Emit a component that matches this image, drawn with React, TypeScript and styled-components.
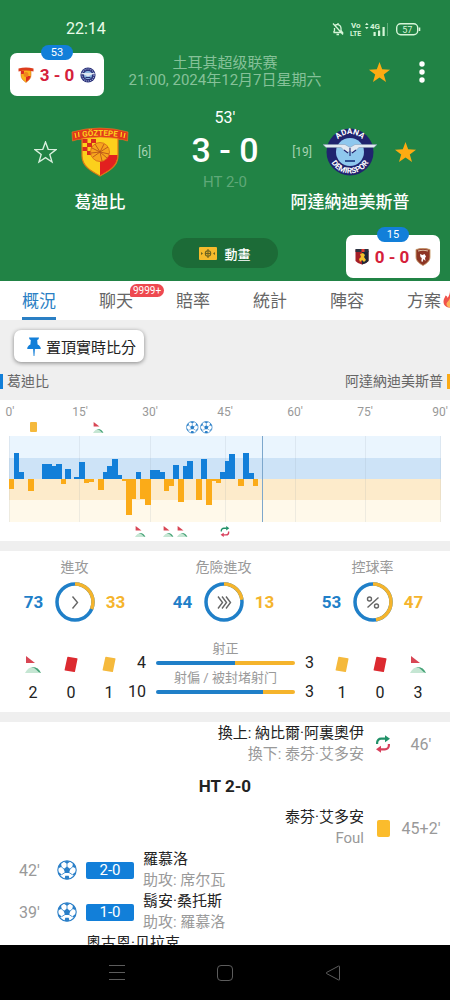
import React from "react";
import styled, { createGlobalStyle } from "styled-components";

const BLUE = "#127fd9";
const AMBER = "#f5b42c";

const GlobalStyle = createGlobalStyle`
  * { box-sizing: border-box; }
  body {
    margin: 0;
    font-family: Roboto, "Noto Sans CJK TC", sans-serif;
    background: #fff;
    color: #222;
  }
  button { font: inherit; border: 0; padding: 0; background: none; color: inherit; cursor: pointer; }
  svg { display: block; flex: none; }
`;

const Screen = styled.div`
  display: flex;
  flex-direction: column;
  height: 100vh;
  overflow: hidden;
`;

const Content = styled.main`
  flex: 1;
  min-height: 0;
  overflow-y: auto;
  scrollbar-width: none;
  &::-webkit-scrollbar { display: none; }
`;

/* ---------- header ---------- */

const Header = styled.header`
  position: relative;
  background: #218345;
  color: #fff;
  padding-bottom: 13px;
`;

const StatusBar = styled.div`
  display: flex;
  align-items: center;
  justify-content: space-between;
  padding: 19px 28px 16px 66px;
  font-size: 16px;
  line-height: 20px;
  color: #e9fbe9;
`;

const TopRow = styled.div`
  display: grid;
  grid-template-columns: 1fr auto 1fr;
  align-items: center;
  padding: 0 14px;
`;

const League = styled.div`
  grid-column: 2;
  text-align: center;
  font-size: 15px;
  line-height: 17px;
  color: #86c199;
  white-space: nowrap;
`;

const Actions = styled.div`
  display: flex;
  justify-content: flex-end;
  gap: 15px;
`;

const IconButton = styled.button`
  display: flex;
  align-items: center;
  justify-content: center;
  width: 28px;
  height: 28px;
`;

const Match = styled.div`
  display: grid;
  grid-template-columns: 1fr 74px 1fr;
  padding: 19px 12px 0;
`;

const Side = styled.div`
  padding-top: 16px;
  text-align: center;
`;

const CrestRow = styled.div`
  display: grid;
  grid-template-columns: 34px 60px 34px;
  gap: 8px;
  justify-content: center;
  align-items: center;
  justify-items: center;
  height: 56px;
`;

const Rank = styled.span<{ $away?: boolean }>`
  justify-self: ${(p) => (p.$away ? "end" : "start")};
  font-size: 12px;
  color: #a6d3b2;
`;

const TeamName = styled.div`
  padding-top: 10px;
  font-size: 17px;
  line-height: 24px;
  font-weight: 500;
  white-space: nowrap;
`;

const Centre = styled.div`
  text-align: center;
  white-space: nowrap;
`;

const Minute = styled.div`
  font-size: 16px;
  line-height: 20px;
`;

const Score = styled.div`
  font-size: 34px;
  line-height: 44px;
  font-weight: 500;
`;

const HalfTime = styled.div`
  font-size: 15px;
  line-height: 20px;
  color: #5fa878;
`;

const AnimationButton = styled.button`
  display: flex;
  align-items: center;
  justify-content: center;
  gap: 7px;
  width: 106px;
  height: 30px;
  margin: 24px auto 0;
  border-radius: 15px;
  background: #1c6b37;
  font-size: 13px;
  font-weight: 500;
`;

const FloatCard = styled.button<{ $corner: "start" | "end" }>`
  position: absolute;
  ${(p) => (p.$corner === "start" ? "left: 10px; top: 53px;" : "right: 10px; bottom: 3px;")}
  display: flex;
  align-items: center;
  justify-content: center;
  gap: 6px;
  width: 94px;
  height: 43px;
  border-radius: 7px;
  background: #fff;
  color: #d5203a;
  font-size: 17px;
  font-weight: 700;
  white-space: nowrap;
`;

const FloatMinute = styled.span`
  position: absolute;
  top: -8px;
  left: 50%;
  transform: translateX(-50%);
  width: 32px;
  border-radius: 8px;
  background: ${BLUE};
  color: #fff;
  font-size: 11px;
  font-weight: 400;
  line-height: 15px;
  text-align: center;
`;

/* ---------- tabs ---------- */

const Tabs = styled.nav`
  display: flex;
  gap: 43px;
  padding-left: 22px;
  overflow: hidden;
  background: #fff;
`;

const Tab = styled.button<{ $active?: boolean }>`
  position: relative;
  display: flex;
  align-items: center;
  flex: none;
  height: 39px;
  font-size: 17px;
  color: ${(p) => (p.$active ? "#2a7fc4" : "#666")};
  border-bottom: 3px solid ${(p) => (p.$active ? "#2a7fc4" : "transparent")};
`;

const TabBadge = styled.span`
  position: absolute;
  left: 31px;
  top: 3px;
  padding: 0 3px;
  border-radius: 7px 7px 7px 2px;
  background: #ee4950;
  color: #fff;
  font-size: 10px;
  line-height: 13px;
`;

/* ---------- pin bar and legend ---------- */

const PinArea = styled.section`
  background: #efefef;
  padding-top: 10px;
`;

const PinButton = styled.button`
  display: flex;
  align-items: center;
  gap: 4px;
  height: 32px;
  margin-left: 14px;
  padding: 0 8px 0 12px;
  border-radius: 7px;
  background: #fff;
  box-shadow: 0 1px 4px rgba(0, 0, 0, 0.45);
  font-size: 15px;
  color: #222;
`;

const Legend = styled.div`
  display: flex;
  justify-content: space-between;
  padding: 9px 0;
`;

const LegendItem = styled.span<{ $away?: boolean }>`
  font-size: 14px;
  line-height: 20px;
  color: #666;
  display: flex;
  align-items: center;
  gap: 4px;
  flex-direction: ${(p) => (p.$away ? "row-reverse" : "row")};
  &::before {
    content: "";
    width: 3px;
    height: 15px;
    background: ${(p) => (p.$away ? "#fbab18" : BLUE)};
  }
`;

/* ---------- chart ---------- */

const ChartSection = styled.section`
  padding-top: 4px;
`;

const Axis = styled.div`
  display: grid;
  grid-template-columns: 70fr 70fr 75fr 70fr 70fr 75fr 0;
  padding: 0 10px 1px;
  font-size: 12px;
  line-height: 16px;
  color: #999;
`;

const Tick = styled.span`
  display: flex;
  justify-content: center;
  width: 0;
  white-space: nowrap;
`;

const ChartSvg = styled.svg`
  width: 100%;
  height: auto;
`;

/* ---------- statistics ---------- */

const Divider = styled.div`
  height: 10px;
  background: #efefef;
`;

const Stats = styled.section`
  padding: 6px 0 9px;
`;

const Rings = styled.div`
  display: grid;
  grid-template-columns: repeat(3, 1fr);
  padding-right: 3px;
`;

const RingStat = styled.div`
  text-align: center;
`;

const RingTitle = styled.div`
  font-size: 14px;
  line-height: 20px;
  color: #999;
`;

const RingRow = styled.div`
  display: flex;
  align-items: center;
  justify-content: center;
  gap: 11px;
  padding-top: 5px;
`;

const RingValue = styled.span<{ $away?: boolean }>`
  width: 20px;
  font-size: 17px;
  font-weight: 700;
  color: ${(p) => (p.$away ? AMBER : "#1f7fc8")};
`;

const Shots = styled.div`
  display: grid;
  grid-template-columns: 114px 1fr 114px;
  padding: 20px 13px 0 14px;
`;

const Tally = styled.div`
  display: grid;
  grid-template-columns: repeat(3, 1fr);
`;

const TallyItem = styled.div`
  display: flex;
  flex-direction: column;
  align-items: center;
  gap: 9px;
  padding-top: 12px;
  font-size: 16px;
  line-height: 20px;
`;

const TallyIcon = styled.span`
  display: flex;
  align-items: center;
  height: 20px;
`;

const BarRow = styled.div`
  display: grid;
  grid-template-columns: 18px 1fr 18px;
  column-gap: 10px;
  align-items: end;
  height: 29px;
`;

const BarValue = styled.span<{ $away?: boolean }>`
  display: flex;
  justify-content: ${(p) => (p.$away ? "flex-start" : "flex-end")};
  font-size: 16px;
  line-height: 16px;
`;

const BarCell = styled.div`
  text-align: center;
  padding-bottom: 6px;
`;

const BarLabel = styled.div`
  font-size: 13px;
  line-height: 14px;
  padding-bottom: 5px;
  color: #999;
  white-space: nowrap;
`;

const Bar = styled.div`
  display: flex;
  height: 4px;
  border-radius: 2px;
  overflow: hidden;
`;

const BarPart = styled.span<{ $share: number; $away?: boolean }>`
  flex: ${(p) => p.$share};
  background: ${(p) => (p.$away ? AMBER : "#1f7fc8")};
`;

/* ---------- timeline ---------- */

const Timeline = styled.section`
  padding-top: 1px;
`;

const HomeEvent = styled.div`
  display: grid;
  grid-template-columns: 29px 20px auto 1fr;
  align-items: center;
  gap: 9px;
  padding-left: 19px;
  min-height: 42px;
`;

const AwayEvent = styled.div`
  display: grid;
  grid-template-columns: 1fr 20px 38px;
  align-items: center;
  justify-items: center;
  column-gap: 9px;
  min-height: 42px;
  padding-right: 10px;
`;

const EventText = styled.div<{ $away?: boolean; $top?: boolean }>`
  justify-self: ${(p) => (p.$away ? "end" : "start")};
  align-self: ${(p) => (p.$top ? "start" : "center")};
  text-align: ${(p) => (p.$away ? "right" : "left")};
  font-size: 15px;
  line-height: 21px;
  white-space: nowrap;
`;

const Muted = styled.div`
  color: #999;
`;

const EventTime = styled.span`
  font-size: 16px;
  color: #999;
  white-space: nowrap;
`;

const GoalScore = styled.span`
  width: 48px;
  border-radius: 2px;
  background: ${BLUE};
  color: #fff;
  font-size: 15px;
  line-height: 17px;
  text-align: center;
`;

const PeriodLine = styled.h2`
  margin: 0;
  font-size: 17px;
  line-height: 42px;
  font-weight: 700;
  text-align: center;
`;

/* ---------- system navigation ---------- */

const SystemNav = styled.nav`
  display: grid;
  grid-template-columns: repeat(3, 1fr);
  justify-items: center;
  align-items: center;
  flex: none;
  height: 55px;
  padding: 0 63px;
  background: #000;
`;

/* ---------- icons ---------- */

const STAR = "M12 1l2.8 7.7 8.2.3-6.5 5 2.3 7.9-6.8-4.6-6.8 4.6 2.3-7.9L1 9l8.2-.3z";

const Star = ({ filled }: { filled?: boolean }) => (
  <svg width="23" height="23" viewBox="0 0 24 24" fill={filled ? "#fdab12" : "none"} stroke={filled ? "none" : "#d9f0de"} strokeWidth="1.4">
    <path d={STAR} />
  </svg>
);

const StatusIcons = () => (
  <svg width="90" height="16" viewBox="0 0 90 16" fill="none" stroke="#d6f5d8" fontFamily="Roboto, sans-serif">
    <path d="M1.500 11.500h9l-1.500-2V7a3.500 3.500 0 0 0-6-2.400M2.500 7v2.500l-1 2M4.500 13.500h2.500M6 2v1.500M1 2.500l10 11" strokeWidth="1.300" />
    <g fill="#d6f5d8" stroke="none" fontWeight="700">
      <text x="19" y="7" fontSize="8">Vo</text>
      <text x="18" y="15" fontSize="7">LTE</text>
      <text x="38" y="8" fontSize="8">4G</text>
      <path d="M33 4l1.800-2.200L36.600 4zM33 6l1.800 2.200L36.600 6zM41.500 11h2.200v4h-2.200zM46 9.500h2.200V15H46zM50.500 6h2.200v9h-2.200z" />
      <path d="M55 2h1v13h-1z" opacity=".35" />
    </g>
    <rect x="64.700" y="2.700" width="21" height="11" rx="4" strokeWidth="1.400" />
    <path d="M87.500 6.500v3.500" strokeWidth="1.600" />
    <text x="75.200" y="11.500" textAnchor="middle" fontSize="9" fill="#d6f5d8" stroke="none">57</text>
  </svg>
);

const GoztepeCrest = ({ width = 58 }: { width?: number }) => (
  <svg width={width} height={(width * 50) / 58} viewBox="0 0 58 50">
    <path d="M11 8h36v21c0 10-9 15-18 20-9-5-18-10-18-20z" fill="#fcd01c" stroke="#d97a14" strokeWidth="1.200" />
    <path d="M29 28h17.500c0 11-8 15-17.500 20.500z" fill="#e2201f" />
    <path d="M11.500 12h5v4h-5zM20 12h5v4h-5zM16 16h5v4h-5zM25 16h4v4h-4zM11.500 20h5v4h-5zM20 20h5v4h-5zM16 24h5v4h-5z" fill="#d92c1c" />
    <circle cx="29" cy="25" r="9.500" fill="#f7a51c" stroke="#d4661a" strokeWidth=".8" />
    <path d="M21 21l8 4 8-5M22 30l7-5 2 9M24 17l5 8-9 1M33 17l-4 8 9 2M29 25l7 6" stroke="#b9551a" strokeWidth=".9" fill="none" />
    <path d="M1 5q28-8 56 0l-.5 9q-5-2-9-1.500v-1q-18-3-37 0v1q-4-.5-9 1.500z" fill="#e23a1b" stroke="#ef7a1d" strokeWidth=".6" />
    <path id="goztepe-arc" d="M10 10.200q19-3 38 0" fill="none" />
    <text fontSize="8" fontWeight="700" fill="#fcd01c" fontFamily="Roboto, sans-serif" textAnchor="middle">
      <textPath href="#goztepe-arc" startOffset="50%">GÖZTEPE</textPath>
    </text>
    <path d="M4 6l1 5M7.500 5l.5 5M50.500 5l-.5 5M54 6l-1 5" stroke="#fcd01c" strokeWidth="1.200" />
  </svg>
);

const AdanaCrest = ({ width = 54 }: { width?: number }) => (
  <svg width={width} height={(width * 48) / 54} viewBox="0 0 54 48">
    <circle cx="27" cy="24" r="23.500" fill="#20246f" />
    <circle cx="27" cy="24" r="14" fill="#8fc8ee" />
    <path d="M0 16.500h22l5 3 5-3h22l-3 3H36l-6 5.500-3-2-3 2-6-5.500H3z" fill="#e3eaf2" stroke="#7f93ad" strokeWidth=".5" />
    <path d="M27 20v8M21 22l4 3M33 22l-4 3" stroke="#20246f" strokeWidth="1.100" />
    <path d="M22 33h10" stroke="#2d4f92" strokeWidth="2" />
    <path id="adana-top" d="M11 22a16 16 0 0 1 32 0" fill="none" />
    <path id="adana-bottom" d="M5.500 24a21.500 21.500 0 0 0 43 0" fill="none" />
    <g fontSize="8" fontWeight="700" fill="#fff" fontFamily="Roboto, sans-serif" textAnchor="middle">
      <text><textPath href="#adana-top" startOffset="50%">ADANA</textPath></text>
      <text><textPath href="#adana-bottom" startOffset="50%">DEMIRSPOR</textPath></text>
    </g>
  </svg>
);

const SmallGoztepe = () => (
  <svg width="16" height="16" viewBox="0 0 16 16">
    <path d="M3 2h10v6c0 4-2.500 5.500-5 7.500C5.500 13.500 3 12 3 8z" fill="#f9b41c" stroke="#d9711c" strokeWidth=".6" />
    <path d="M8 9h4.600c-.4 3-2.400 4.500-4.600 6zM3 4h3v3H3z" fill="#dd2c1f" />
    <path d="M.5 1.500q7.500-2 15 0v3q-7.500-2-15 0z" fill="#dd3c1c" />
    <circle cx="8" cy="7.500" r="2.500" fill="#f0851c" />
  </svg>
);

const SmallAdana = () => (
  <svg width="16" height="16" viewBox="0 0 16 16">
    <circle cx="8" cy="8" r="7.600" fill="#2a3278" />
    <circle cx="8" cy="8" r="6" fill="none" stroke="#a9b0dd" strokeWidth="1.200" strokeDasharray="1 1" />
    <circle cx="8" cy="8" r="4" fill="#8db9e0" />
    <path d="M0 6h16l-5 2-3 1.500L5 8z" fill="#dfe6f0" />
    <path d="M5.500 10.500h5" stroke="#2a3278" />
  </svg>
);

const GenoaCrest = () => (
  <svg width="14" height="17" viewBox="0 0 14 17">
    <path d="M.5 1.500h13V13q-2.500 3-6.500 3.500Q3 16 .5 13z" fill="#a61e27" />
    <path d="M7 3h6.500v10q-2.500 3-6.500 3.500z" fill="#1d2838" />
    <path d="M.5 1h13v3H.5z" fill="#2c3442" />
    <path d="M6.500 1h3v3h-3z" fill="#e53935" />
    <path d="M5 6l3-1 2 2-1 2 2 3-2 2-2-2-2 2-1-3 2-2z" fill="#f3c22b" />
  </svg>
);

const TorinoCrest = () => (
  <svg width="16" height="18" viewBox="0 0 16 18">
    <path d="M1 1.500q7-2.500 14 0V9c0 4-3.500 6.500-7 8.500C4.500 15.500 1 13 1 9z" fill="#8d3524" stroke="#c79b6c" strokeWidth=".9" />
    <path d="M3 3q5-1.500 10 0" stroke="#dcbfa0" strokeWidth="1.200" fill="none" />
    <path d="M5 6l2.500 1L9.500 6l1.500 2.500-1 1.500.5 3-2-2-1 3-1.200-.8.5-3.200-1.300-1z" fill="#fff" />
  </svg>
);

const PitchIcon = () => (
  <svg width="18" height="13" viewBox="0 0 18 13">
    <rect width="18" height="13" rx="1" fill="#f6ba2c" />
    <g fill="none" stroke="#6d6320" strokeWidth="1.100">
      <circle cx="9" cy="6.500" r="2.700" />
      <path d="M9 2v9M6 6.500h6" />
    </g>
    <path d="M2 5l2 1.500L2 8zM16 5l-2 1.500L16 8z" fill="#6d6320" />
  </svg>
);

const PinIcon = () => (
  <svg width="16" height="21" viewBox="0 0 16 21" fill={BLUE}>
    <path d="M3 1.500h10q0 2-1.800 2.500l.4 4.500q3.200 1.500 3.200 4.500H1.200q0-3 3.200-4.500L4.800 4Q3 3.500 3 1.500zM7.100 13h1.800l-.5 7h-.8z" />
  </svg>
);

const Flame = () => (
  <svg width="18" height="18" viewBox="0 0 18 18">
    <path d="M9 .5c1 4 6.500 5.500 6.500 11 0 4-3 6-6.500 6s-6.500-2-6.500-6c0-2.500 1.500-4 2-6 1.500.5 2 1.500 2 2.500C8 6 9 4 9 .5z" fill="#f0524a" />
    <path d="M9 8c0 3 3.500 3.500 3.500 6 0 2-1.500 3.500-3.500 3.500S5.500 16 5.500 14 8 11 9 8z" fill="#fdb35a" />
  </svg>
);

const CornerShape = () => (
  <>
    <path d="M1 0v7h9z" fill="#d84654" />
    <path d="M0 17q3-6 8-6t8 6z" fill="#c5e6d3" />
    <path d="M6 11q7-1 10 6-3-1-5-3.500T6 11z" fill="#45a277" />
  </>
);

const Corner = () => (
  <svg width="16" height="17" viewBox="0 0 16 17"><CornerShape /></svg>
);

const TiltedCard = ({ color }: { color: string }) => (
  <svg width="14" height="17" viewBox="0 0 14 17">
    <path d="M4 .7L13 2.300q.6.100.5.700L11 15.500q-.2.700-.8.600L1 14.600q-.6-.2-.4-.8L3.300 1.200q.1-.6.700-.5z" fill={color} />
  </svg>
);

const YellowCard = () => (
  <svg width="13" height="17" viewBox="0 0 13 17"><rect width="13" height="17" rx="2" fill="#fbbc2c" /></svg>
);

const SwapShape = () => (
  <>
    <g fill="none" strokeWidth="2.200">
      <path d="M2.100 9V7.700a4 4 0 0 1 4-4H11" stroke="#219168" />
      <path d="M13.900 9v1.300a4 4 0 0 1-4 4H5" stroke="#d8405c" />
    </g>
    <path d="M10 .2l5 3.500-5 3.500z" fill="#219168" />
    <path d="M6 10.800l-5 3.500 5 3.500z" fill="#d8405c" />
  </>
);

const Swap = () => (
  <svg width="16" height="18" viewBox="0 0 16 18"><SwapShape /></svg>
);

const BallShape = () => (
  <>
    <circle cx="10" cy="10" r="9.200" fill="#fff" stroke="#2a7fc8" strokeWidth="1.100" />
    <g fill="#2a7fc8">
      <path d="M10 6.600l3.300 2.400-1.300 3.900H8L6.700 9z" />
      <path d="M6.500 1.600Q10 .2 13.500 1.600L10 3.700zM1 8.500Q1.500 5 4 3l.6 3.800zM19 8.500Q18.500 5 16 3l-.6 3.800zM3 15.600Q1.200 13.500 1 11.500l3.700 3zM17 15.600q1.800-2.100 2-4.100l-3.700 3zM7.500 18.900l.8-3.200h3.400l.8 3.200q-2.500.6-5 0z" />
    </g>
    <path d="M10 3v4M4 6.500L7 9M16 6.500L13 9M4.500 14.800L8 12.500M15.500 14.800L12 12.500" stroke="#2a7fc8" strokeWidth=".8" />
  </>
);

const Ball = () => (
  <svg width="20" height="20" viewBox="0 0 20 20"><BallShape /></svg>
);

/* ---------- data ---------- */

// Pressure bars: start x, end x, height; positive heights belong to the home side.
const PRESSURE: [number, number, number][] = [
  [9, 14, -10], [14, 19, 26], [19, 24, 7], [28, 34, -12], [42, 52, 15], [52, 56, 13], [56, 62, 15],
  [61, 66, -5], [65, 71, 10], [74, 80, 2], [79, 85, 17], [84, 89, -4], [89, 94, -3], [98, 104, -11],
  [103, 107, 7], [107, 112, 13], [112, 118, 20], [118, 122, 4], [122, 126, -2], [126, 132, -36],
  [132, 136, -20], [136, 141, 7], [140, 145, -20], [145, 151, -26], [150, 160, 9], [160, 165, 7],
  [164, 169, -12], [169, 174, -7], [173, 179, 14], [178, 184, -23], [183, 187, 13], [187, 193, 18],
  [196, 202, -21], [201, 207, 20], [206, 212, -26], [212, 216, -2], [216, 221, -4], [220, 225, 7],
  [225, 229, 18], [229, 235, 25], [238, 244, -7], [243, 249, 26], [249, 254, 6], [253, 258, -7],
];

const ZERO = 58;

const PressureChart = () => (
  <ChartSvg viewBox="0 0 450 120" role="img" aria-label="葛迪比 / 阿達納迪美斯普">
    <rect x="9" y="15" width="432" height="22" fill="#eaf5fe" />
    <rect x="9" y="37" width="432" height="21" fill="#cde3f7" />
    <rect x="9" y="58" width="432" height="21" fill="#fdebcb" />
    <rect x="9" y="79" width="432" height="22" fill="#fff9ea" />
    {[9, 79, 150, 225, 295, 365, 440].map((x) => (
      <path key={x} d={`M${x + 0.5} 15V101`} stroke="#8a9aa5" strokeOpacity=".15" />
    ))}
    {PRESSURE.map(([a, b, h]) => (
      <rect key={a} x={a} width={b - a} y={h > 0 ? ZERO - h : ZERO} height={Math.abs(h)} fill={h > 0 ? BLUE : "#fbab18"} />
    ))}
    <path d="M262.500 15V101" stroke="#7da7cc" />
    <rect x="30" y="1" width="7" height="10" rx="1" fill="#f5b93c" />
    <g transform="translate(93 1) scale(.65)"><CornerShape /></g>
    <g transform="translate(186 0) scale(.63)"><BallShape /></g>
    <g transform="translate(200 0) scale(.63)"><BallShape /></g>
    {[135, 163, 177].map((x) => (
      <g key={x} transform={`translate(${x} 105) scale(.65)`}><CornerShape /></g>
    ))}
    <g transform="translate(220 105) scale(.62)"><SwapShape /></g>
  </ChartSvg>
);

const RING_GLYPHS: Record<string, string> = {
  attack: "M17.500 14.500l5 6-5 6",
  danger: "M14 14.500l4.500 6-4.500 6M18 14.500l4.500 6-4.500 6M22 14.500l4.500 6-4.500 6",
  possession: "M25.500 15.500l-11 10M16.500 15a2 2 0 1 1 0 4 2 2 0 1 1 0-4M23.500 22a2 2 0 1 1 0 4 2 2 0 1 1 0-4",
};

const Ring = ({ home, away, glyph }: { home: number; away: number; glyph: string }) => {
  const length = 2 * Math.PI * 18;
  const awayLength = (length * away) / (home + away);
  return (
    <svg width="40" height="40" viewBox="0 0 40 40" fill="none">
      <circle cx="20" cy="20" r="18" stroke="#1f7fc8" strokeWidth="3.500" />
      <circle cx="20" cy="20" r="18" stroke={AMBER} strokeWidth="3.500" strokeDasharray={`${awayLength} ${length}`} transform="rotate(-90 20 20)" />
      <path d={RING_GLYPHS[glyph]} stroke="#666" strokeWidth="1.400" />
    </svg>
  );
};

const RINGS = [
  { title: "進攻", home: 73, away: 33, glyph: "attack" },
  { title: "危險進攻", home: 44, away: 13, glyph: "danger" },
  { title: "控球率", home: 53, away: 47, glyph: "possession" },
];

const BARS = [
  { label: "射正", home: 4, away: 3 },
  { label: "射偏 / 被封堵射门", home: 10, away: 3 },
];

const TABS = ["概況", "聊天", "賠率", "統計", "陣容", "方案"];

const Count = ({ icon, value }: { icon: React.ReactNode; value: number }) => (
  <TallyItem>
    <TallyIcon>{icon}</TallyIcon>
    <span>{value}</span>
  </TallyItem>
);

const Goal = ({ time, score, scorer, assist }: { time: string; score: string; scorer: string; assist: string }) => (
  <HomeEvent>
    <EventTime>{time}</EventTime>
    <Ball />
    <GoalScore>{score}</GoalScore>
    <EventText>
      <div>{scorer}</div>
      <Muted>{assist}</Muted>
    </EventText>
  </HomeEvent>
);

export default function App() {
  return (
    <Screen>
      <GlobalStyle />
      <Content>
        <Header>
          <StatusBar>
            <span>22:14</span>
            <StatusIcons />
          </StatusBar>
          <TopRow>
            <League>
              <div>土耳其超级联赛</div>
              <div>21:00, 2024年12月7日星期六</div>
            </League>
            <Actions>
              <IconButton aria-label="收藏"><Star filled /></IconButton>
              <IconButton aria-label="更多">
                <svg width="6" height="24" viewBox="0 0 6 24" fill="#fff">
                  <circle cx="3" cy="4" r="2.700" /><circle cx="3" cy="12" r="2.700" /><circle cx="3" cy="20" r="2.700" />
                </svg>
              </IconButton>
            </Actions>
          </TopRow>
          <Match>
            <Side>
              <CrestRow>
                <IconButton aria-label="收藏葛迪比"><Star /></IconButton>
                <GoztepeCrest />
                <Rank>[6]</Rank>
              </CrestRow>
              <TeamName>葛迪比</TeamName>
            </Side>
            <Centre>
              <Minute>53'</Minute>
              <Score>3 - 0</Score>
              <HalfTime>HT 2-0</HalfTime>
            </Centre>
            <Side>
              <CrestRow>
                <Rank $away>[19]</Rank>
                <AdanaCrest />
                <IconButton aria-label="收藏阿達納迪美斯普"><Star filled /></IconButton>
              </CrestRow>
              <TeamName>阿達納迪美斯普</TeamName>
            </Side>
          </Match>
          <AnimationButton><PitchIcon />動畫</AnimationButton>
          <FloatCard $corner="start">
            <FloatMinute>53</FloatMinute>
            <SmallGoztepe /><span>3 - 0</span><SmallAdana />
          </FloatCard>
          <FloatCard $corner="end">
            <FloatMinute>15</FloatMinute>
            <GenoaCrest /><span>0 - 0</span><TorinoCrest />
          </FloatCard>
        </Header>

        <Tabs>
          {TABS.map((name, i) => (
            <Tab key={name} $active={i === 0}>
              {name}
              {i === 1 && <TabBadge>9999+</TabBadge>}
              {i === 5 && <Flame />}
            </Tab>
          ))}
        </Tabs>

        <PinArea>
          <PinButton><PinIcon />置頂實時比分</PinButton>
          <Legend>
            <LegendItem>葛迪比</LegendItem>
            <LegendItem $away>阿達納迪美斯普</LegendItem>
          </Legend>
        </PinArea>

        <ChartSection>
          <Axis>
            {[0, 15, 30, 45, 60, 75, 90].map((m) => <Tick key={m}>{m}'</Tick>)}
          </Axis>
          <PressureChart />
        </ChartSection>
        <Divider />

        <Stats>
          <Rings>
            {RINGS.map((r) => (
              <RingStat key={r.title}>
                <RingTitle>{r.title}</RingTitle>
                <RingRow>
                  <RingValue>{r.home}</RingValue>
                  <Ring home={r.home} away={r.away} glyph={r.glyph} />
                  <RingValue $away>{r.away}</RingValue>
                </RingRow>
              </RingStat>
            ))}
          </Rings>
          <Shots>
            <Tally>
              <Count icon={<Corner />} value={2} />
              <Count icon={<TiltedCard color="#dc2a30" />} value={0} />
              <Count icon={<TiltedCard color="#f5b93c" />} value={1} />
            </Tally>
            <div>
              {BARS.map((b) => (
                <BarRow key={b.label}>
                  <BarValue>{b.home}</BarValue>
                  <BarCell>
                    <BarLabel>{b.label}</BarLabel>
                    <Bar>
                      <BarPart $share={b.home} />
                      <BarPart $share={b.away} $away />
                    </Bar>
                  </BarCell>
                  <BarValue $away>{b.away}</BarValue>
                </BarRow>
              ))}
            </div>
            <Tally>
              <Count icon={<TiltedCard color="#f5b93c" />} value={1} />
              <Count icon={<TiltedCard color="#dc2a30" />} value={0} />
              <Count icon={<Corner />} value={3} />
            </Tally>
          </Shots>
        </Stats>
        <Divider />

        <Timeline>
          <AwayEvent>
            <EventText $away>
              <div>換上: 納比爾·阿裏奧伊</div>
              <Muted>換下: 泰芬·艾多安</Muted>
            </EventText>
            <Swap />
            <EventTime>46'</EventTime>
          </AwayEvent>
          <PeriodLine>HT 2-0</PeriodLine>
          <AwayEvent>
            <EventText $away>
              <div>泰芬·艾多安</div>
              <Muted>Foul</Muted>
            </EventText>
            <YellowCard />
            <EventTime>45+2'</EventTime>
          </AwayEvent>
          <Goal time="42'" score="2-0" scorer="羅慕洛" assist="助攻: 席尔瓦" />
          <Goal time="39'" score="1-0" scorer="鬍安·桑托斯" assist="助攻: 羅慕洛" />
          <HomeEvent>
            <span />
            <span />
            <EventText $top>奧古恩·贝拉克</EventText>
          </HomeEvent>
        </Timeline>
      </Content>

      <SystemNav>
        <IconButton aria-label="選單">
          <svg width="16" height="16" viewBox="0 0 16 16" stroke="#5c5c5c"><path d="M0 .5h16M0 7.500h16M0 14.500h16" /></svg>
        </IconButton>
        <IconButton aria-label="主畫面">
          <svg width="16" height="16" viewBox="0 0 16 16" fill="none" stroke="#5c5c5c"><rect x=".5" y=".5" width="15" height="15" rx="3.500" /></svg>
        </IconButton>
        <IconButton aria-label="返回">
          <svg width="16" height="16" viewBox="0 0 16 16" fill="none" stroke="#5c5c5c" strokeLinejoin="round"><path d="M14.500 1.500v13q0 1-1 .4L1.500 8.500q-.8-.5 0-1l12-6.400q1-.5 1 .4z" /></svg>
        </IconButton>
      </SystemNav>
    </Screen>
  );
}
